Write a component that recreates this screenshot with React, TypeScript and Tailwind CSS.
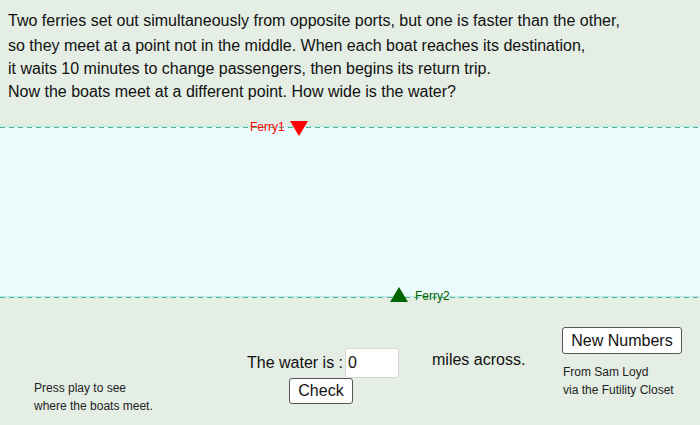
import { useState } from "react";

const dash =
  "h-px bg-[repeating-linear-gradient(90deg,#5eac82_0px,#5eac82_5px,transparent_5px,transparent_9px)]";

const question = [
  "Two ferries set out simultaneously from opposite ports, but one is faster than the other,",
  "so they meet at a point not in the middle. When each boat reaches its destination,",
  "it waits 10 minutes to change passengers, then begins its return trip.",
  "Now the boats meet at a different point. How wide is the water?",
];

export default function App() {
  const [answer, setAnswer] = useState("0");

  return (
    <div className="w-[700px] h-[425px] overflow-hidden bg-[#e5eee5] font-['Liberation_Sans',Arial,sans-serif] text-[#111]">
      {/* Question */}
      <div className="h-[126px] pl-[8px] pt-[9px] text-[16px] leading-[23px]">
        {question.map((line, i) => (
          <div key={i} className={i === 0 ? "mb-[2px]" : ""}>
            {line}
          </div>
        ))}
      </div>

      {/* Water */}
      <div className="relative h-[172px] flex flex-col bg-[#ebfbfb]">
        <div className="h-px bg-[#b2eeee]" />
        <div className={dash} />
        <div className="flex-1" />
        <div className="h-px bg-[#b2eeee]" />
        <div className={`${dash} bg-[#e5eee5]`} />

        {/* Ferry1 */}
        <span className="absolute left-[250px] top-[-6px] text-[12px] leading-[14px] text-[#ff0000]">
          Ferry1
        </span>
        <svg className="absolute left-[290px] top-[-5px]" width="18" height="15" viewBox="0 0 18 15">
          <polygon points="0,0 18,0 9,15" fill="#ff0000" />
        </svg>

        {/* Ferry2 */}
        <svg className="absolute left-[390px] top-[161px]" width="18" height="15" viewBox="0 0 18 15">
          <polygon points="9,0 18,15 0,15" fill="#006400" />
        </svg>
        <span className="absolute left-[415px] top-[163px] text-[12px] leading-[14px] text-[#006400]">
          Ferry2
        </span>
      </div>

      {/* Controls */}
      <div className="h-[127px] flex">
        <div className="w-[247px] pl-[34px] pt-[81px] text-[12px] leading-[18px] text-[#222]">
          <div>Press play to see</div>
          <div>where the boats meet.</div>
        </div>

        <div className="w-[315px] pt-[50px]">
          <div className="flex items-start">
            <span className="mt-[6px] text-[16px] leading-[18px]">The water is :</span>
            <input
              value={answer}
              onChange={(e) => setAnswer(e.target.value)}
              className="ml-[2px] w-[54px] h-[30px] px-[2px] bg-white border border-[#d6d6d6] rounded-[3px] text-[16px] outline-none"
            />
            <span className="ml-[33px] mt-[3px] text-[16px] leading-[18px]">miles across.</span>
          </div>
          <button className="ml-[42px] w-[64px] h-[26px] bg-white border border-[#555] rounded-[3px] text-[16px] leading-none">
            Check
          </button>
        </div>

        <div className="pt-[29px]">
          <button className="w-[120px] h-[27px] bg-white border border-[#555] rounded-[3px] text-[16px] leading-none">
            New Numbers
          </button>
          <div className="mt-[9px] pl-px text-[12px] leading-[18px] text-[#222]">
            <div>From Sam Loyd</div>
            <div>via the Futility Closet</div>
          </div>
        </div>
      </div>
    </div>
  );
}
